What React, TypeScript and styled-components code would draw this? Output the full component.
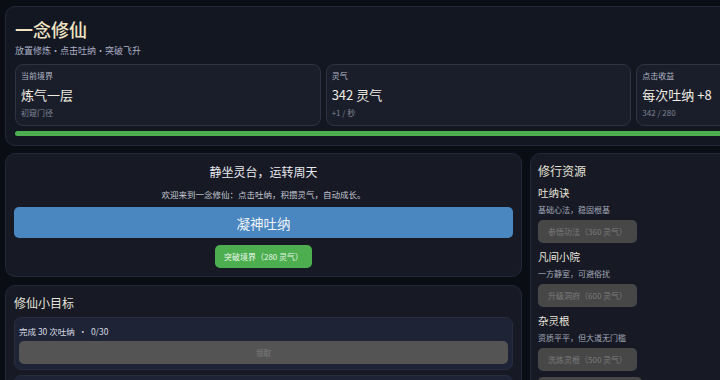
import React from "react";
import styled, { createGlobalStyle } from "styled-components";

const stats = [
  { label: "当前境界", value: "炼气一层", sub: "初窥门径" },
  { label: "灵气", value: "342 灵气", sub: "+1 / 秒" },
  { label: "点击收益", value: "每次吐纳 +8", sub: "342 / 280" },
];

const resources = [
  { name: "吐纳诀", desc: "基础心法，稳固根基", actions: ["参悟功法（360 灵气）"] },
  { name: "凡间小院", desc: "一方静室，可避俗扰", actions: ["升级洞府（600 灵气）"] },
  { name: "杂灵根", desc: "资质平平，但大道无门槛", actions: ["洗炼灵根（500 灵气）", "觉醒血脉（1200 灵气）"] },
];

const goals = [
  { text: "完成 30 次吐纳", progress: "0/30" },
  { text: "积攒 1000 灵气", progress: "342/1000" },
];

const App = () => {
  const progress = Math.min(100, (342 / 280) * 100);
  return (
    <>
      <GlobalStyle />
      <Page>
        <Header>
          <Title>一念修仙</Title>
          <Subtitle>放置修炼·点击吐纳·突破飞升</Subtitle>
          <StatGrid>
            {stats.map((s) => (
              <StatCard key={s.label}>
                <StatLabel>{s.label}</StatLabel>
                <StatValue>{s.value}</StatValue>
                <StatSub>{s.sub}</StatSub>
              </StatCard>
            ))}
          </StatGrid>
          <Track>
            <Fill style={{ width: `${progress}%` }} />
          </Track>
        </Header>

        <Main>
          <LeftCol>
            <Panel>
              <PracticeTitle>静坐灵台，运转周天</PracticeTitle>
              <PracticeText>欢迎来到一念修仙：点击吐纳，积攒灵气，自动成长。</PracticeText>
              <BigButton>凝神吐纳</BigButton>
              <BreakButton>突破境界（280 灵气）</BreakButton>
            </Panel>

            <Panel>
              <SectionTitle>修仙小目标</SectionTitle>
              <GoalList>
                {goals.map((g) => (
                  <GoalCard key={g.text}>
                    <GoalText>
                      {g.text} &nbsp;·&nbsp; {g.progress}
                    </GoalText>
                    <ClaimButton disabled>领取</ClaimButton>
                  </GoalCard>
                ))}
              </GoalList>
            </Panel>
          </LeftCol>

          <SidePanel>
            <SectionTitle>修行资源</SectionTitle>
            <ResList>
              {resources.map((r) => (
                <ResItem key={r.name}>
                  <ResName>{r.name}</ResName>
                  <ResDesc>{r.desc}</ResDesc>
                  {r.actions.map((a) => (
                    <ResButton key={a} disabled>
                      {a}
                    </ResButton>
                  ))}
                </ResItem>
              ))}
            </ResList>
          </SidePanel>
        </Main>
      </Page>
    </>
  );
};

export default App;

const GlobalStyle = createGlobalStyle`
  body {
    margin: 0;
    background: #0b0d14;
    overflow: hidden;
    font-family: "Noto Sans CJK SC", "Noto Sans", sans-serif;
    color: #e6e3dc;
  }
`;

const Page = styled.div`
  width: 947px;
  padding: 6px 5px;
`;

const Header = styled.div`
  border: 1px solid #22273a;
  border-radius: 10px;
  background: #131722;
  padding: 8px 9px 9px;
`;

const Title = styled.h1`
  margin: 0;
  font-size: 18px;
  font-weight: 500;
  line-height: 28px;
  color: #efe3c2;
`;

const Subtitle = styled.div`
  margin-top: 1px;
  font-size: 9px;
  line-height: 14px;
  color: #a9aec2;
`;

const StatGrid = styled.div`
  display: grid;
  grid-template-columns: repeat(3, 1fr);
  gap: 5px;
  margin-top: 6px;
`;

const StatCard = styled.div`
  border: 1px solid #2e3344;
  border-radius: 8px;
  background: #1a1e2a;
  padding: 5px 5px 6px;
`;

const StatLabel = styled.div`
  font-size: 8px;
  line-height: 12px;
  color: #b3b7c6;
`;

const StatValue = styled.div`
  margin-top: 3px;
  font-size: 13px;
  line-height: 20px;
  color: #f0ece2;
`;

const StatSub = styled.div`
  margin-top: 2px;
  font-size: 8px;
  line-height: 12px;
  color: #7f8596;
`;

const Track = styled.div`
  margin-top: 5px;
  height: 5px;
  border-radius: 3px;
  background: #262b38;
  overflow: hidden;
`;

const Fill = styled.div`
  height: 100%;
  background: #4caf50;
`;

const Main = styled.div`
  display: grid;
  grid-template-columns: 517px 250px;
  gap: 8px;
  margin-top: 7px;
  align-items: start;
`;

const LeftCol = styled.div`
  display: flex;
  flex-direction: column;
  gap: 8px;
`;

const Panel = styled.div`
  border: 1px solid #22273a;
  border-radius: 10px;
  background: #171a25;
  padding: 8px;
  display: flex;
  flex-direction: column;
  align-items: stretch;
`;

const PracticeTitle = styled.div`
  text-align: center;
  font-size: 12px;
  line-height: 20px;
  color: #e9e9ef;
`;

const PracticeText = styled.div`
  margin-top: 5px;
  text-align: center;
  font-size: 8.5px;
  line-height: 14px;
  color: #c3c6d2;
`;

const BigButton = styled.button`
  margin-top: 6px;
  height: 31px;
  border: none;
  border-radius: 5px;
  background: #4a86bf;
  color: #eef3f8;
  font-family: inherit;
  font-size: 13.5px;
`;

const BreakButton = styled.button`
  align-self: center;
  margin-top: 7px;
  height: 23px;
  padding: 0 9px;
  border: none;
  border-radius: 5px;
  background: #4cae4f;
  color: #eaf6ea;
  font-family: inherit;
  font-size: 8px;
`;

const SectionTitle = styled.div`
  font-size: 12px;
  line-height: 18px;
  color: #e6e2d8;
`;

const GoalList = styled.div`
  display: flex;
  flex-direction: column;
  gap: 5px;
  margin-top: 5px;
`;

const GoalCard = styled.div`
  border: 1px solid #262d40;
  border-radius: 7px;
  background: #1e2435;
  padding: 6px 4px 5px;
  display: flex;
  flex-direction: column;
`;

const GoalText = styled.div`
  font-size: 8.5px;
  line-height: 14px;
  color: #d9dbe3;
`;

const ClaimButton = styled.button`
  margin-top: 3px;
  height: 23px;
  border: none;
  border-radius: 5px;
  background: #545454;
  color: #7d7d7d;
  font-family: inherit;
  font-size: 7.5px;
`;

const SidePanel = styled.div`
  border: 1px solid #22273a;
  border-radius: 10px;
  background: #171a25;
  padding: 8px 7px;
  min-height: 260px;
`;

const ResList = styled.div`
  display: flex;
  flex-direction: column;
  gap: 6px;
  margin-top: 5px;
`;

const ResItem = styled.div`
  display: flex;
  flex-direction: column;
  align-items: flex-start;
`;

const ResName = styled.div`
  font-size: 10.5px;
  line-height: 16px;
  color: #ebe7dd;
`;

const ResDesc = styled.div`
  margin-top: 3px;
  font-size: 8px;
  line-height: 12px;
  color: #a3a8b8;
`;

const ResButton = styled.button`
  margin-top: 4px;
  height: 23px;
  padding: 0 10px;
  border: none;
  border-radius: 5px;
  background: #474747;
  color: #7b7b7b;
  font-family: inherit;
  font-size: 8px;
  & + & {
    margin-top: 6px;
  }
`;
